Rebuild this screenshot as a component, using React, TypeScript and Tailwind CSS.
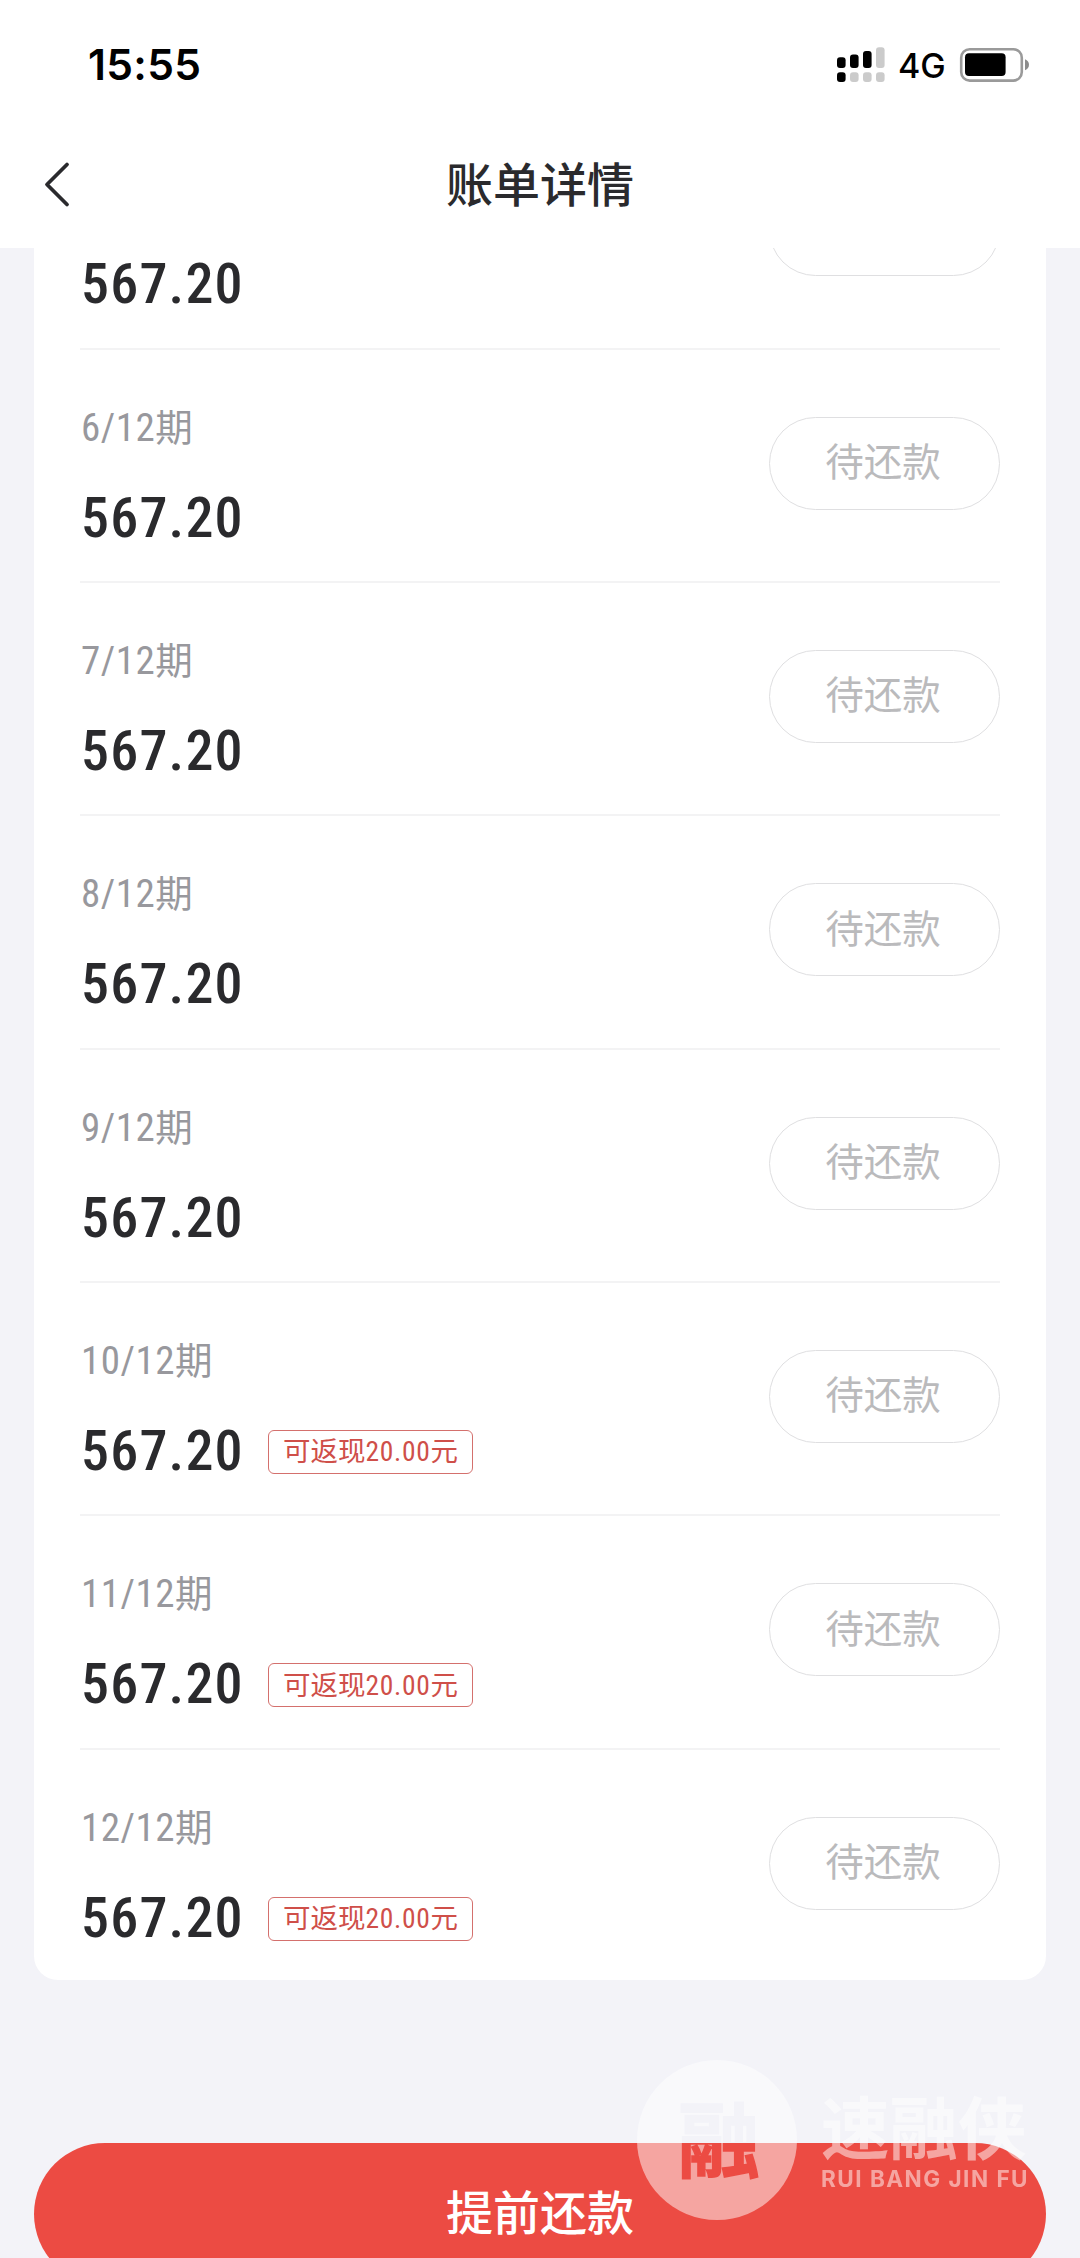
import React from "react";

type Bill = {
  term?: string;
  amount: string;
  status?: string;
  cashback?: string;
};

const bills: Bill[] = [
  { amount: "567.20" },
  { term: "6/12", amount: "567.20", status: "待还款" },
  { term: "7/12", amount: "567.20", status: "待还款" },
  { term: "8/12", amount: "567.20", status: "待还款" },
  { term: "9/12", amount: "567.20", status: "待还款" },
  { term: "10/12", amount: "567.20", status: "待还款", cashback: "20.00" },
  { term: "11/12", amount: "567.20", status: "待还款", cashback: "20.00" },
  { term: "12/12", amount: "567.20", status: "待还款", cashback: "20.00" },
];

const StatusBar: React.FC = () => (
  <div className="flex h-[130px] items-center justify-between pl-[88px] pr-[50px] font-['Inter',sans-serif] text-black">
    <span className="text-[42.5px] leading-[42px] font-semibold tracking-[0.3px]">15:55</span>
    <div className="flex items-center">
      <svg width="48" height="36" viewBox="0 0 48 36">
        <rect x="0" y="10.3" width="8.6" height="10.7" rx="3" />
        <rect x="13" y="7.6" width="8.6" height="13.4" rx="3" />
        <rect x="26" y="4" width="8.6" height="17" rx="3" />
        <rect x="39" y="0.3" width="8.6" height="20.7" rx="3" fill="#cbcbcb" />
        <rect x="0" y="25.3" width="8.6" height="9.7" rx="3" />
        <rect x="13" y="25.3" width="8.6" height="9.7" rx="3" fill="#cbcbcb" />
        <rect x="26" y="25.3" width="8.6" height="9.7" rx="3" fill="#cbcbcb" />
        <rect x="39" y="25.3" width="8.6" height="9.7" rx="3" fill="#cbcbcb" />
      </svg>
      <span className="mt-[2px] ml-[13px] w-[47px] text-[34px] leading-[36px] font-medium">4G</span>
      <svg className="ml-[14px]" width="71" height="36" viewBox="0 0 71 36">
        <rect x="2.2" y="2.2" width="60.6" height="31.4" rx="8.5" fill="none" stroke="#9a9a9a" strokeWidth="2.6" />
        <rect x="6" y="6.3" width="40.6" height="22.6" rx="4" />
        <path d="M66 12.2c2.6 1 4 3 4 5.500s-1.400 4.500-4 5.500z" fill="#8c8c8c" />
      </svg>
    </div>
  </div>
);

const BillRow: React.FC<{ bill: Bill; last: boolean }> = ({ bill, last }) => (
  <li
    className={`flex shrink-0 items-start justify-between ${last ? "h-[230.5px]" : "h-[233.33px] border-b-2 border-[#f3f3f4]"}`}
  >
    <div className="flex flex-col pt-[58px] pl-[1px]">
      <div className="flex h-10 items-center text-[#98989d]">
        {bill.term && (
          <>
            <span className="text-[39px] leading-10 tracking-[0.5px] font-stretch-[86%]">{bill.term}</span>
            <span className="text-[37.5px] leading-10">期</span>
          </>
        )}
      </div>
      <div className="mt-[42px] flex h-14 items-center">
        <span className="w-[162px] text-[56px] leading-[56px] font-medium tracking-[1.2px] text-[#2a2a2d] font-stretch-[86%]">
          {bill.amount}
        </span>
        {bill.cashback && (
          <span className="mt-[2px] ml-[25px] flex h-11 w-[205px] items-center justify-center rounded-md border-[1.5px] border-[#d4706d] pt-px text-[27.5px] leading-[40px] text-[#cf4f49]">
            可返现<span className="tracking-[0.7px] font-stretch-[86%]">{bill.cashback}</span>元
          </span>
        )}
      </div>
    </div>
    <button className="mt-[67px] h-[93px] w-[231px] rounded-full border-[1.5px] border-[#dfdfe1] pr-[3px] text-[38.5px] text-[#bababc]">
      {bill.status}
    </button>
  </li>
);

const Watermark: React.FC = () => (
  <div className="pointer-events-none absolute top-[2060px] left-[637px] flex text-white opacity-50">
    <svg width="160" height="160" viewBox="0 0 160 160">
      <mask id="seal">
        <rect width="160" height="160" fill="white" />
        <text x="82" y="111" textAnchor="middle" className="text-[82px] font-bold" fill="black" stroke="black" strokeWidth="1.5">
          融
        </text>
      </mask>
      <circle cx="80" cy="80" r="80" fill="white" mask="url(#seal)" />
    </svg>
    <div className="ml-6 flex flex-col pt-9">
      <span className="text-[68.5px] leading-[70px] font-bold">速融侠</span>
      <span className="text-[22.5px] leading-[26px] font-bold tracking-[1.5px] whitespace-nowrap font-['Inter',sans-serif]">
        RUI BANG JIN FU
      </span>
    </div>
  </div>
);

const App: React.FC = () => {
  return (
    <div className="relative flex h-[2258px] w-[1080px] flex-col overflow-hidden bg-[#f3f3f8] font-['Roboto','Noto_Sans_CJK_SC',sans-serif]">
      <header className="h-[248px] shrink-0 bg-white">
        <StatusBar />
        <div className="grid h-[108px] grid-cols-3 items-center px-[44px] text-[#2a2a2d]">
          <svg width="28" height="48" viewBox="0 0 28 48" fill="none" stroke="currentColor" strokeWidth="3.8" strokeLinecap="round" strokeLinejoin="round">
            <path d="M23 4.500 3 24.500l20 20" />
          </svg>
          <h1 className="pt-1 text-center text-[47px] leading-[56px] font-medium">账单详情</h1>
        </div>
      </header>

      {/* list is scrolled down, the first term sits partly under the header */}
      <main className="flex h-[1732px] shrink-0 flex-col justify-end overflow-hidden px-[34px]">
        <ul className="flex flex-col rounded-b-[24px] bg-white px-[46px]">
          {bills.map((bill, i) => (
            <BillRow key={i} bill={bill} last={i === bills.length - 1} />
          ))}
        </ul>
      </main>

      <footer className="mt-[163px] px-[34px]">
        <button className="h-[142px] w-full rounded-full bg-[#ec4b43] text-[47px] font-medium text-white">
          提前还款
        </button>
      </footer>

      <Watermark />
    </div>
  );
};

export default App;
